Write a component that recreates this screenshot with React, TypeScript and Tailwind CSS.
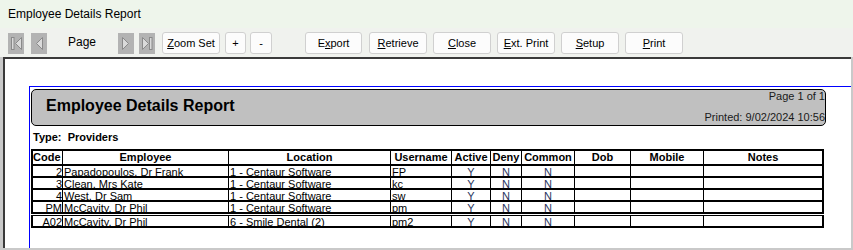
import React from "react";

const sans = { fontFamily: '"Liberation Sans", Arial, sans-serif' };

function NavIcon({ kind }: { kind: "first" | "prev" | "next" | "last" }) {
  const f = "#dadada";
  const s = "#8a8a8a";
  return (
    <svg width="16" height="21" viewBox="0 0 16 21" className="block">
      <rect x="0" y="0" width="16" height="21" fill="#b3b3b3" />
      {kind === "first" && (
        <>
          <rect x="3.5" y="4.5" width="2.5" height="12" fill={f} stroke={s} strokeWidth="1" />
          <polygon points="13.5,4.5 13.5,16.5 7.5,10.5" fill={f} stroke={s} strokeWidth="1" />
        </>
      )}
      {kind === "prev" && (
        <polygon points="11.5,4.5 11.5,16.5 5.5,10.5" fill={f} stroke={s} strokeWidth="1" />
      )}
      {kind === "next" && (
        <polygon points="4.5,4.5 4.5,16.5 10.5,10.5" fill={f} stroke={s} strokeWidth="1" />
      )}
      {kind === "last" && (
        <>
          <polygon points="3.5,4.5 3.5,16.5 9.5,10.5" fill={f} stroke={s} strokeWidth="1" />
          <rect x="10.5" y="4.5" width="2.5" height="12" fill={f} stroke={s} strokeWidth="1" />
        </>
      )}
    </svg>
  );
}

function Btn({
  w,
  ml,
  pre,
  u,
  post,
}: {
  w: string;
  ml: string;
  pre?: string;
  u?: string;
  post?: string;
}) {
  return (
    <div
      className={`${w} ${ml} h-[22px] flex items-center justify-center rounded-[3px] border border-[#d0d0d0] bg-[#fcfcfc] text-[11px] text-black whitespace-pre`}
      style={sans}
    >
      {pre}
      {u && <span className="underline underline-offset-[1px]">{u}</span>}
      {post}
    </div>
  );
}

const cols = [
  { name: "Code", w: "w-[32px]", extra: "border-l-2", align: "text-right" },
  { name: "Employee", w: "w-[166px]", extra: "", align: "text-left pl-[1px]" },
  { name: "Location", w: "w-[162px]", extra: "", align: "text-left pl-[1px]" },
  { name: "Username", w: "w-[61px]", extra: "", align: "text-left pl-[1px]" },
  { name: "Active", w: "w-[39px]", extra: "", align: "text-center" },
  { name: "Deny", w: "w-[31px]", extra: "", align: "text-center" },
  { name: "Common", w: "w-[53px]", extra: "", align: "text-center" },
  { name: "Dob", w: "w-[56px]", extra: "", align: "text-center" },
  { name: "Mobile", w: "w-[73px]", extra: "", align: "text-center" },
  { name: "Notes", w: "w-[120px]", extra: "", align: "text-center" },
];

const rows = [
  ["2", "Papadopoulos, Dr Frank", "1 - Centaur Software", "FP", "Y", "N", "N", "", "", ""],
  ["3", "Clean, Mrs Kate", "1 - Centaur Software", "kc", "Y", "N", "N", "", "", ""],
  ["4", "West, Dr Sam", "1 - Centaur Software", "sw", "Y", "N", "N", "", "", ""],
  ["PM", "McCavity, Dr Phil", "1 - Centaur Software", "pm", "Y", "N", "N", "", "", ""],
  ["A02", "McCavity, Dr Phil", "6 - Smile Dental (2)", "pm2", "Y", "N", "N", "", "", ""],
];

export default function App() {
  return (
    <div className="w-[853px] h-[250px] flex flex-col overflow-hidden bg-[#f0f0f0]">
      {/* Title bar */}
      <div
        className="h-[28px] shrink-0 bg-[#eef5eb] flex items-center pl-[8px] text-[12px] text-black"
        style={sans}
      >
        Employee Details Report
      </div>

      {/* Toolbar */}
      <div className="h-[29px] shrink-0 bg-[#f0f2ee] flex items-start pl-[8px] pt-[4px]">
        <div className="mt-[1px]">
          <NavIcon kind="first" />
        </div>
        <div className="mt-[1px] ml-[7px]">
          <NavIcon kind="prev" />
        </div>
        <div className="ml-[21px] h-[20px] leading-[20px] text-[12px] text-black" style={sans}>
          Page
        </div>
        <div className="mt-[1px] ml-[22px]">
          <NavIcon kind="next" />
        </div>
        <div className="mt-[1px] ml-[5px]">
          <NavIcon kind="last" />
        </div>
        <Btn w="w-[58px]" ml="ml-[7px]" u="Z" post="oom Set" />
        <Btn w="w-[21px]" ml="ml-[5px]" pre="+" />
        <Btn w="w-[22px]" ml="ml-[4px]" pre="-" />
        <Btn w="w-[57px]" ml="ml-[33px]" pre="E" u="x" post="port" />
        <Btn w="w-[58px]" ml="ml-[7px]" u="R" post="etrieve" />
        <Btn w="w-[58px]" ml="ml-[6px]" u="C" post="lose" />
        <Btn w="w-[58px]" ml="ml-[6px]" u="E" post="xt. Print" />
        <Btn w="w-[58px]" ml="ml-[6px]" u="S" post="etup" />
        <Btn w="w-[58px]" ml="ml-[6px]" u="P" post="rint" />
      </div>

      {/* Report viewer */}
      <div className="flex-1 min-h-0 bg-[#c9c9c9] pl-[3px] pr-[2px] pb-[2px] flex">
        <div className="flex-1 min-w-0 border-t-2 border-l-2 border-[#3a3a3a] bg-white overflow-hidden pl-[24px] pt-[27px] flex">
          <div
            className="flex-1 min-w-0 border-t border-l border-[#0000ff] pl-[1px] pt-[2px] text-black"
            style={sans}
          >
            {/* Header box */}
            <div className="w-[795px] h-[37px] border border-black rounded-[5px] bg-[#c0c0c0] flex justify-between">
              <div className="pl-[14px] pt-[7px] text-[16px] leading-[18px] font-bold">
                Employee Details Report
              </div>
              <div className="flex flex-col justify-between items-end pb-[1px] text-[11px] leading-[13px] text-[#1a1a1a]">
                <div>Page 1 of 1</div>
                <div>Printed: 9/02/2024 10:56</div>
              </div>
            </div>

            {/* Type */}
            <div className="mt-[5px] pl-[2px] text-[11px] leading-[13px] font-bold whitespace-pre">
              Type:  Providers
            </div>

            {/* Table */}
            <div className="mt-[5px] w-[793px]">
              <div className="flex border-t-2 border-b-2 border-black">
                {cols.map((c, i) => (
                  <div
                    key={c.name}
                    className={`${c.w} ${c.extra} ${
                      i === cols.length - 1 ? "border-r-2" : "border-r"
                    } border-black h-[13px] text-[11px] leading-[13px] font-bold ${
                      i === 0 ? "text-left" : "text-center"
                    } overflow-hidden whitespace-nowrap`}
                  >
                    {c.name}
                  </div>
                ))}
              </div>
              {rows.map((r, ri) => (
                <div
                  key={ri}
                  className={`flex border-b-2 border-black ${ri === 4 ? "mt-[1px] border-t" : ""}`}
                >
                  {cols.map((c, i) => (
                    <div
                      key={c.name}
                      className={`${c.w} ${c.extra} ${
                        i === cols.length - 1 ? "border-r-2" : "border-r"
                      } border-black h-[10px] text-[11px] leading-[12px] ${c.align} overflow-hidden whitespace-nowrap ${
                        i >= 4 ? "text-[#2a3560]" : "text-black"
                      }`}
                    >
                      {r[i]}
                    </div>
                  ))}
                </div>
              ))}
            </div>
          </div>
        </div>
      </div>
    </div>
  );
}
